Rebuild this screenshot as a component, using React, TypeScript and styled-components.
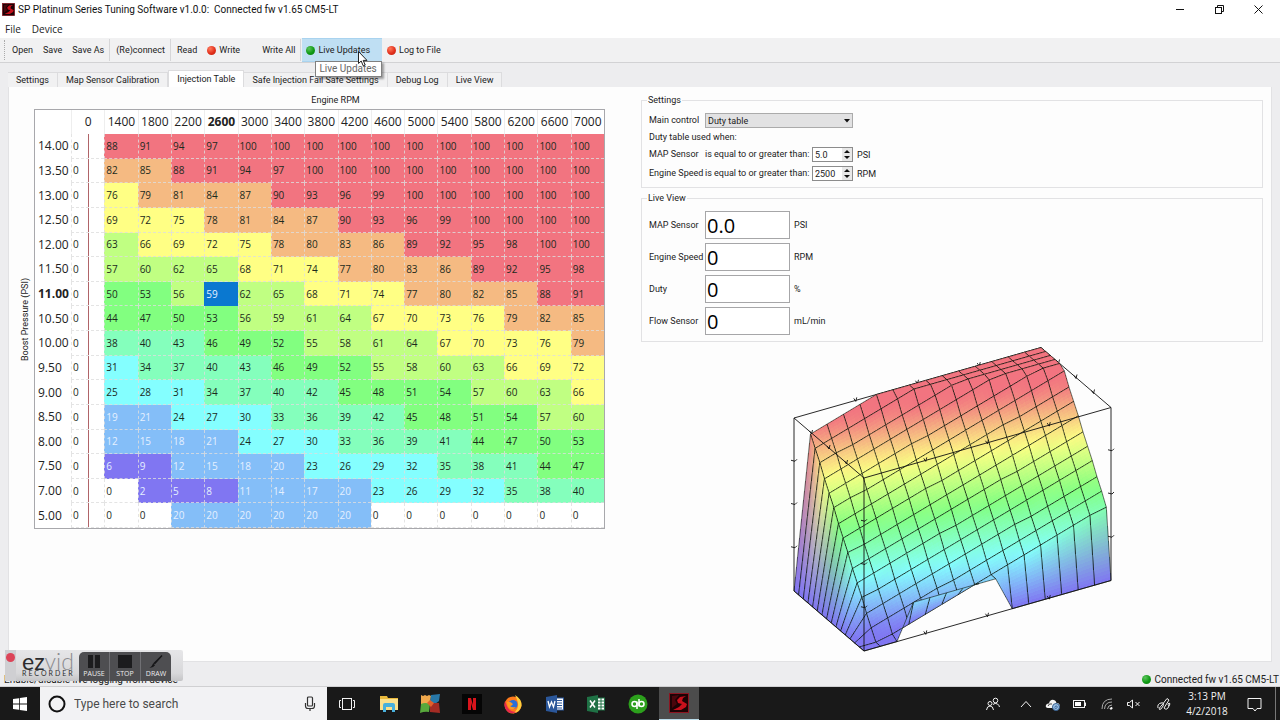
import React from "react";
import styled, { createGlobalStyle } from "styled-components";

const UI = `Roboto, "Liberation Sans", sans-serif`;
const SEGOE = `"Open Sans", "Noto Sans", sans-serif`;

const GlobalStyle = createGlobalStyle`
  * { box-sizing: border-box; }
  body { margin: 0; background: #ededef; color: #222; font-family: ${UI}; font-size: 9px; }
  button, input, select { font: inherit; color: inherit; margin: 0; }
`;

/* ---------- data ---------- */

const RPM = [0, 1400, 1800, 2200, 2600, 3000, 3400, 3800, 4200, 4600, 5000, 5400, 5800, 6200, 6600, 7000];

const ROWS: [string, number[]][] = [
  ["14.00", [0, 88, 91, 94, 97, 100, 100, 100, 100, 100, 100, 100, 100, 100, 100, 100]],
  ["13.50", [0, 82, 85, 88, 91, 94, 97, 100, 100, 100, 100, 100, 100, 100, 100, 100]],
  ["13.00", [0, 76, 79, 81, 84, 87, 90, 93, 96, 99, 100, 100, 100, 100, 100, 100]],
  ["12.50", [0, 69, 72, 75, 78, 81, 84, 87, 90, 93, 96, 99, 100, 100, 100, 100]],
  ["12.00", [0, 63, 66, 69, 72, 75, 78, 80, 83, 86, 89, 92, 95, 98, 100, 100]],
  ["11.50", [0, 57, 60, 62, 65, 68, 71, 74, 77, 80, 83, 86, 89, 92, 95, 98]],
  ["11.00", [0, 50, 53, 56, 59, 62, 65, 68, 71, 74, 77, 80, 82, 85, 88, 91]],
  ["10.50", [0, 44, 47, 50, 53, 56, 59, 61, 64, 67, 70, 73, 76, 79, 82, 85]],
  ["10.00", [0, 38, 40, 43, 46, 49, 52, 55, 58, 61, 64, 67, 70, 73, 76, 79]],
  ["9.50", [0, 31, 34, 37, 40, 43, 46, 49, 52, 55, 58, 60, 63, 66, 69, 72]],
  ["9.00", [0, 25, 28, 31, 34, 37, 40, 42, 45, 48, 51, 54, 57, 60, 63, 66]],
  ["8.50", [0, 19, 21, 24, 27, 30, 33, 36, 39, 42, 45, 48, 51, 54, 57, 60]],
  ["8.00", [0, 12, 15, 18, 21, 24, 27, 30, 33, 36, 39, 41, 44, 47, 50, 53]],
  ["7.50", [0, 6, 9, 12, 15, 18, 20, 23, 26, 29, 32, 35, 38, 41, 44, 47]],
  ["7.00", [0, 0, 2, 5, 8, 11, 14, 17, 20, 23, 26, 29, 32, 35, 38, 40]],
  ["5.00", [0, 0, 0, 20, 20, 20, 20, 20, 20, 0, 0, 0, 0, 0, 0, 0]],
];

const SELECTED_RPM = 2600;
const SELECTED_PSI = "11.00";

const PALETTE = ["#8076f2", "#84bef8", "#84ffff", "#84ffbc", "#82ff80", "#c0ff82", "#ffff84", "#f5ba82", "#f27480"];

const cellColor = (v: number) => (v === 0 ? "#ffffff" : PALETTE[Math.min(8, Math.floor((v - 0.01) / 10.95))]);

/* ---------- frame ---------- */

const Window = styled.div`
  min-height: 100vh;
  display: flex;
  flex-direction: column;
`;

const TitleBar = styled.header`
  display: flex;
  align-items: center;
  height: 19px;
  padding: 0 2px;
  gap: 3px;
  background: #fff;
  color: #111;
`;

const Title = styled.h1`
  flex: 1;
  margin: 0;
  font: 400 10px/18px ${UI};
  white-space: pre;
`;

const WindowControls = styled.div`
  display: flex;
`;

const WindowButton = styled.button`
  width: 39px;
  height: 19px;
  padding: 0;
  border: 0;
  background: none;
  display: grid;
  place-items: center;
`;

const MenuBar = styled.nav`
  display: flex;
  height: 19px;
  gap: 1px;
  background: #fff;
`;

const MenuItem = styled.button`
  border: 0;
  padding: 0 5px;
  background: none;
  font: 400 10px/18px ${SEGOE};
`;

const ToolBar = styled.div`
  display: flex;
  align-items: center;
  height: 25px;
  padding-left: 4px;
  background: #f1f1f2;
  border-bottom: 1px solid #d2d2d4;
`;

const Grip = styled.span`
  height: 20px;
  margin-right: 2px;
  border-left: 1px dotted #aaa;
`;

const Separator = styled.span`
  height: 22px;
  margin-right: 1px;
  border-left: 1px solid #d6d6d8;
`;

const ToolButton = styled.button<{ $active?: boolean; $after?: number }>`
  position: relative;
  display: flex;
  align-items: center;
  gap: 3px;
  height: 24px;
  padding: ${(p) => (p.$active ? "0 12px 0 4px" : "0 5px")};
  margin-right: ${(p) => p.$after ?? 0}px;
  border: 1px solid ${(p) => (p.$active ? "#a9d3ef" : "transparent")};
  border-width: 1px 0;
  background: ${(p) => (p.$active ? "#bfdff3" : "none")};
  white-space: nowrap;
`;

const Led = styled.span<{ $on?: boolean }>`
  width: 9px;
  height: 9px;
  border-radius: 50%;
  background: ${(p) =>
    p.$on
      ? "radial-gradient(circle at 35% 30%, #5cc45c, #0f9a14 55%, #0a7a10)"
      : "radial-gradient(circle at 35% 30%, #ff7a5c, #e2301c 55%, #b8200f)"};
`;

const ToolTip = styled.span`
  position: absolute;
  z-index: 2;
  left: 13px;
  top: 22px;
  padding: 0 4px 0 3px;
  border: 1px solid #808080;
  background: #fff;
  box-shadow: 2px 2px 2px rgba(0, 0, 0, 0.35);
  color: #666;
  font: 400 10px/14px ${UI};
`;

const Cursor = styled.svg`
  position: absolute;
  z-index: 3;
  left: 56px;
  top: 12px;
`;

const Tabs = styled.div`
  display: flex;
  align-items: flex-end;
  height: 24px;
  padding: 0 8px;
`;

const Tab = styled.button<{ $selected?: boolean }>`
  height: ${(p) => (p.$selected ? 17 : 15)}px;
  padding: 0 8px;
  border: 1px solid #dcdcde;
  border-bottom: 0;
  border-left-width: ${(p) => (p.$selected ? 1 : 0)}px;
  background: ${(p) => (p.$selected ? "#fff" : "#f1f1f2")};
  white-space: nowrap;
`;

const Pane = styled.main`
  flex: 1;
  display: grid;
  grid-template-columns: 586fr 622fr;
  gap: 36px;
  align-items: start;
  margin: 0 8px;
  padding: 7px 8px 5px 10px;
  background: #fdfdfd;
  border: 1px solid #e2e2e4;
  border-width: 0 1px 1px;
`;

/* ---------- injection table ---------- */

const MapArea = styled.section`
  display: grid;
  grid-template-columns: 15px 1fr;
  row-gap: 2px;
`;

const AxisTop = styled.div`
  grid-column: 2;
  padding-left: 32px;
  line-height: 13px;
  text-align: center;
`;

const AxisLeft = styled.div`
  writing-mode: vertical-rl;
  transform: rotate(180deg);
  line-height: 12px;
  text-align: center;
  justify-self: start;
`;

const Grid = styled.table`
  width: 100%;
  height: 420px;
  table-layout: fixed;
  border-collapse: separate;
  border-spacing: 0;
  border: 1px solid #a8a8ac;
  background: #fff;
  font-family: ${SEGOE};
`;

const CornerHead = styled.th`
  width: 36px;
  height: 24px;
  padding: 0;
`;

const Head = styled.th<{ $bold?: boolean }>`
  padding: 0;
  height: 24px;
  border-left: 1px solid #eee;
  font-size: 12px;
  font-weight: ${(p) => (p.$bold ? 700 : 400)};
  line-height: 16px;
  white-space: nowrap;
  text-align: center;
`;

const RowHead = styled.th<{ $bold?: boolean }>`
  padding: 0 0 0 3px;
  font-size: 12px;
  font-weight: ${(p) => (p.$bold ? 700 : 400)};
  line-height: 16px;
  text-align: left;
  white-space: nowrap;
`;

const Cell = styled.td<{ $bg: string; $light?: boolean; $marker?: boolean; $selected?: boolean }>`
  padding: 0 1px;
  font-size: 10px;
  line-height: 14px;
  color: ${(p) => (p.$light ? "#e4f0ff" : "#1c2a1c")};
  background: ${(p) =>
    p.$marker ? "linear-gradient(#b06468, #b06468) 50% 0 / 1px 100% no-repeat #fff" : p.$bg};
  border: 1px dashed ${(p) => (p.$selected ? p.$bg : "rgba(222, 222, 222, 0.8)")};
  border-width: 0 0 1px 1px;
`;

function InjectionTable() {
  return (
    <MapArea>
      <AxisTop>Engine RPM</AxisTop>
      <AxisLeft>Boost Pressure (PSI)</AxisLeft>
      <Grid>
        <thead>
          <tr>
            <CornerHead />
            {RPM.map((r) => (
              <Head key={r} scope="col" $bold={r === SELECTED_RPM}>
                {r}
              </Head>
            ))}
          </tr>
        </thead>
        <tbody>
          {ROWS.map(([psi, values]) => (
            <tr key={psi}>
              <RowHead scope="row" $bold={psi === SELECTED_PSI}>
                {psi}
              </RowHead>
              {values.map((v, i) => {
                const selected = psi === SELECTED_PSI && RPM[i] === SELECTED_RPM;
                return (
                  <Cell
                    key={i}
                    $bg={selected ? "#0a78d0" : cellColor(v)}
                    $light={selected || (v > 0 && v < 22)}
                    $selected={selected}
                    $marker={i === 0}
                  >
                    {v}
                  </Cell>
                );
              })}
            </tr>
          ))}
        </tbody>
      </Grid>
    </MapArea>
  );
}

/* ---------- settings and live view ---------- */

const Group = styled.fieldset`
  margin: 0 0 4px;
  padding: 7px 7px 6px;
  border: 1px solid #e2e2e4;
  min-width: 0;
`;

const Legend = styled.legend`
  padding: 0 1px;
  margin-left: -2px;
  line-height: 12px;
`;

const Lines = styled.div`
  display: grid;
  gap: 4px;
`;

const Line = styled.div`
  display: grid;
  grid-template-columns: 56px auto 1fr;
  align-items: center;
`;

const ConditionLine = styled(Line)`
  grid-template-columns: 56px 107px 41px 1fr;
`;

const Plain = styled.span`
  line-height: 11px;
  white-space: nowrap;
`;

const FieldLabel = styled.label`
  line-height: 11px;
  white-space: nowrap;
`;

const Unit = styled.span`
  padding-left: 4px;
`;

const SelectBox = styled.div`
  position: relative;
  width: 148px;
  svg {
    position: absolute;
    right: 3px;
    top: 6px;
    pointer-events: none;
  }
`;

const Select = styled.select`
  display: block;
  appearance: none;
  width: 100%;
  height: 15px;
  padding: 0 2px;
  border: 1px solid #ababab;
  border-radius: 0;
  background: #e2e2e3;
`;

const SpinBox = styled.div`
  display: flex;
  height: 15px;
  border: 1px solid #8c8c8c;
  background: #fff;
`;

const SpinInput = styled.input`
  flex: 1;
  min-width: 0;
  padding: 0 2px;
  border: 0;
  background: none;
`;

const SpinButtons = styled.div`
  display: grid;
  width: 10px;
  background: #e8e8e8;
`;

const SpinButton = styled.button`
  display: grid;
  place-items: center;
  padding: 0;
  border: 0;
  background: none;
`;

const Readout = styled.input`
  width: 85px;
  height: 28px;
  padding: 0 1px;
  border: 1px solid #a6a6a8;
  background: #fff;
  color: #000;
  font: 400 20px/26px ${SEGOE};
`;

function Spin({ id, value }: { id: string; value: string }) {
  return (
    <SpinBox>
      <SpinInput id={id} defaultValue={value} />
      <SpinButtons>
        <SpinButton aria-label="Increase">
          <svg width="6" height="3" viewBox="0 0 6 3"><path d="M0 3L3 0L6 3Z" fill="#111" /></svg>
        </SpinButton>
        <SpinButton aria-label="Decrease">
          <svg width="6" height="3" viewBox="0 0 6 3"><path d="M0 0L3 3L6 0Z" fill="#111" /></svg>
        </SpinButton>
      </SpinButtons>
    </SpinBox>
  );
}

const CONDITIONS = [
  { id: "map-limit", name: "MAP Sensor", value: "5.0", unit: "PSI" },
  { id: "rpm-limit", name: "Engine Speed", value: "2500", unit: "RPM" },
];

const READOUTS = [
  { id: "live-map", name: "MAP Sensor", value: "0.0", unit: "PSI" },
  { id: "live-rpm", name: "Engine Speed", value: "0", unit: "RPM" },
  { id: "live-duty", name: "Duty", value: "0", unit: "%" },
  { id: "live-flow", name: "Flow Sensor", value: "0", unit: "mL/min" },
];

/* ---------- 3D surface ---------- */

type Pt = [number, number];

const STEPS = 15;
const HEIGHT = 173;

// Screen position of grid point (i = rpm index, j = pressure index, z = duty 0..100).
const project = (i: number, j: number, z: number): Pt => [
  74 + (i / STEPS) * 247 - (j / STEPS) * 70,
  307 - (i / STEPS) * 70.5 - (j / STEPS) * 60 - (z / 100) * HEIGHT,
];

const duty = (i: number, j: number) => ROWS[STEPS - j][1][i];

const rgb = (hex: string) => [1, 3, 5].map((k) => parseInt(hex.slice(k, k + 2), 16));
const mix = (a: number[], b: number[], t: number) => a.map((v, k) => v + (b[k] - v) * t);

const heat = (v: number) => {
  const p = Math.max(0, Math.min(8, (v - 5) / 10.9));
  const k = Math.min(7, Math.floor(p));
  return mix(rgb(PALETTE[k]), rgb(PALETTE[k + 1]), p - k);
};

const lerp = (a: number, b: number, t: number) => a + (b - a) * t;
const pts = (list: Pt[]) => list.map((p) => p.map((n) => n.toFixed(2)).join(",")).join(" ");

// Cells are painted back to front, each split finely enough for its colour to blend.
function buildSurface() {
  const out: React.ReactNode[] = [];
  for (let j = STEPS - 1; j >= 0; j--) {
    for (let i = STEPS - 1; i >= 0; i--) {
      const a = duty(i, j), b = duty(i + 1, j), c = duty(i + 1, j + 1), d = duty(i, j + 1);
      const ca = heat(a), cb = heat(b), cc = heat(c), cd = heat(d);
      const z = (u: number, v: number) => lerp(lerp(a, b, u), lerp(d, c, u), v);
      const nu = Math.max(4, Math.ceil(Math.max(Math.abs(a - b), Math.abs(c - d)) / 3));
      const nv = Math.max(5, Math.ceil(Math.max(Math.abs(a - d), Math.abs(b - c)) / 2));
      for (let m = nv - 1; m >= 0; m--) {
        for (let n = nu - 1; n >= 0; n--) {
          const u0 = n / nu, u1 = (n + 1) / nu, v0 = m / nv, v1 = (m + 1) / nv;
          const um = (u0 + u1) / 2, vm = (v0 + v1) / 2;
          const col = mix(mix(ca, cb, um), mix(cd, cc, um), vm).map(Math.round).join(",");
          const quad: Pt[] = [
            project(i + u0, j + v0, z(u0, v0)),
            project(i + u1, j + v0, z(u1, v0)),
            project(i + u1, j + v1, z(u1, v1)),
            project(i + u0, j + v1, z(u0, v1)),
          ];
          out.push(
            <polygon key={`${i}-${j}-${m}-${n}`} points={pts(quad)} fill={`rgb(${col})`} shapeRendering="crispEdges" />
          );
        }
      }
      out.push(
        <polygon
          key={`m${i}-${j}`}
          points={pts([project(i, j, a), project(i + 1, j, b), project(i + 1, j + 1, c), project(i, j + 1, d)])}
          fill="none"
          stroke="#0c160c"
          strokeWidth="0.6"
        />
      );
    }
  }
  return out;
}

const surface = buildSurface();

const N = STEPS;
const BACK_EDGES: [Pt, Pt][] = [
  [project(0, N, 100), project(N, N, 100)],
  [project(N, N, 100), project(N, 0, 100)],
];
const FRONT_EDGES: [Pt, Pt][] = [
  [project(0, N, 100), project(0, 0, 100)],
  [project(0, 0, 100), project(N, 0, 100)],
  [project(0, N, 0), project(0, N, 100)],
  [project(0, 0, 0), project(0, 0, 100)],
  [project(N, 0, 0), project(N, 0, 100)],
  [project(0, 0, 0), project(N, 0, 0)],
  [project(0, 0, 0), project(0, N, 0)],
];

function Edges({ list, ticks }: { list: [Pt, Pt][]; ticks: number[] }) {
  return (
    <g stroke="#111" strokeWidth="0.9" fill="none">
      {list.map(([p, q], k) => {
        const vertical = Math.abs(p[0] - q[0]) < 1;
        return (
          <g key={k}>
            <path d={`M${p[0]} ${p[1]}L${q[0]} ${q[1]}`} />
            {ticks.map((t) => {
              const x = lerp(p[0], q[0], t);
              const y = lerp(p[1], q[1], t);
              return (
                <path key={t} d={vertical ? `M${x - 3} ${y - 1}L${x + 1} ${y}L${x + 3} ${y - 2}` : `M${x - 2} ${y - 2}L${x} ${y + 1}L${x + 1} ${y - 3}`} />
              );
            })}
          </g>
        );
      })}
    </g>
  );
}

const Plot = styled.svg`
  display: block;
  margin: -2px auto 0;
  overflow: visible;
`;

/* ---------- status bar, recorder, task bar ---------- */

const StatusBar = styled.footer`
  position: relative;
  display: flex;
  justify-content: space-between;
  align-items: flex-end;
  height: 25px;
  padding: 0 1px 0 4px;
  border-bottom: 1px solid #d0d0d2;
  font: 400 10px/13px ${UI};
`;

const Connection = styled.span`
  display: flex;
  align-items: center;
  gap: 4px;
`;

const Recorder = styled.div`
  position: absolute;
  left: 5px;
  bottom: 5px;
  display: flex;
  align-items: flex-end;
  width: 178px;
  height: 31px;
  background: linear-gradient(#e6e6e8, #d8d8da 75%, #c4c4c6);
  border-radius: 2px;
`;

const RecordStrip = styled.span`
  align-self: stretch;
  width: 11px;
  padding: 3px 1px;
  background: #cfcfd2;
`;

const RecordDot = styled.span`
  display: block;
  width: 9px;
  height: 9px;
  border-radius: 50%;
  background: #dc4458;
`;

const Brand = styled.span`
  width: 63px;
  padding: 0 0 5px 6px;
  font-family: Lato, sans-serif;
  color: #2c2c2e;
`;

const BrandName = styled.span`
  display: block;
  font-size: 23px;
  line-height: 17px;
  em { font-style: normal; font-weight: 300; color: #8c8c90; }
`;

const BrandSub = styled.span`
  display: block;
  font-size: 7px;
  line-height: 6px;
  letter-spacing: 2px;
`;

const RecorderButtons = styled.div`
  display: flex;
  width: 92px;
  height: 29px;
  border-radius: 5px 5px 0 0;
  background: #4e4e51;
  overflow: hidden;
`;

const RecorderButton = styled.button`
  flex: 1;
  display: flex;
  flex-direction: column;
  align-items: center;
  gap: 1px;
  padding: 3px 0 0;
  border: 0;
  border-right: 1px solid #707074;
  background: none;
  color: #ececec;
  font: 400 7px/9px ${SEGOE};
  &:last-child { border-right: 0; }
`;

const TaskBar = styled.nav`
  display: flex;
  height: 34px;
  background: #191919;
  color: #f2f2f2;
`;

const TaskButton = styled.button<{ $active?: boolean }>`
  width: 40px;
  padding: 0;
  border: 0;
  border-bottom: ${(p) => (p.$active ? "2px solid #b9dbe8" : "0")};
  background: ${(p) => (p.$active ? "#4c4c4c" : "none")};
  display: grid;
  place-items: center;
`;

const Search = styled.label`
  display: flex;
  align-items: center;
  gap: 8px;
  width: 287px;
  padding: 0 10px 0 8px;
  background: #f2f2f4;
  color: #444;
`;

const SearchInput = styled.input`
  flex: 1;
  min-width: 0;
  padding: 0;
  border: 0;
  background: none;
  font: 400 12px/16px ${UI};
  &::placeholder { color: #4a4a4a; opacity: 1; }
`;

const Apps = styled.div`
  display: flex;
  justify-content: space-between;
  width: 372px;
`;

const Tray = styled.div`
  display: flex;
  align-items: stretch;
  margin-left: auto;
`;

const TrayButton = styled.button<{ $w?: number }>`
  width: ${(p) => p.$w ?? 27}px;
  padding: 0;
  border: 0;
  background: none;
  display: grid;
  place-items: center;
`;

const Clock = styled.time`
  width: 52px;
  padding-top: 2px;
  font: 400 10px/15px ${SEGOE};
  text-align: center;
`;

const ShowDesktop = styled.button`
  width: 5px;
  padding: 0;
  border: 0;
  border-left: 1px solid #777;
  background: none;
`;

function SpIcon({ size }: { size: number }) {
  return (
    <svg width={size} height={size} viewBox="0 0 20 20">
      <rect x="0.5" y="0.5" width="19" height="19" fill="#1c0305" stroke="#8d1420" />
      <path d="M3 3L10 2L6 7L8 11L3 15Z" fill="#4a060c" />
      <path d="M17 3L11 4L8 7L9 10L13 11L10 14L4 17L12 17L17 14L18 11L13 8L14 5Z" fill="#c8101c" />
    </svg>
  );
}

const Line1 = { fill: "none", stroke: "currentColor", strokeWidth: 1 };

const APPS: { name: string; active?: boolean; icon: React.ReactNode }[] = [
  {
    name: "Task View",
    icon: (
      <svg width="18" height="14" viewBox="0 0 18 14" {...Line1}>
        <rect x="4.5" y="1.5" width="9" height="11" />
        <path d="M3 3.5H1.500V10.500H3M15 3.500H16.500V10.500H15" />
      </svg>
    ),
  },
  {
    name: "File Explorer",
    icon: (
      <svg width="20" height="18" viewBox="0 0 20 18">
        <path d="M1 1H8L9 3H19V15H1Z" fill="#e9b93c" />
        <path d="M1 4H19V15H1Z" fill="#fbe08c" />
        <path d="M4 17V10Q4 8 6 8H14Q16 8 16 10V17H13V12H7V17Z" fill="#48b0dc" />
      </svg>
    ),
  },
  {
    name: "Start Menu",
    icon: (
      <svg width="20" height="20" viewBox="0 0 20 20">
        <path d="M1 1L3 2L5 1L7 2L9 1L11 2L10 10L1 11Z" fill="#f0a84c" />
        <path d="M11 1L20 0L19 7L15 10L10 9Z" fill="#2878a8" />
        <path d="M1 10Q5 8 10 10L9 18Q5 17 0 19Z" fill="#58a83c" />
        <path d="M10 9L19 9L20 19L10 18Z" fill="#a42c24" />
        <path d="M10 6L14 9L11 13L7 9Z" fill="#e0602c" />
      </svg>
    ),
  },
  {
    name: "Netflix",
    icon: (
      <svg width="20" height="20" viewBox="0 0 20 20">
        <rect width="20" height="20" fill="#050505" />
        <path d="M6 4H9L11 11V4H14V16H11L9 9V16H6Z" fill="#d8141c" />
      </svg>
    ),
  },
  {
    name: "Firefox",
    icon: (
      <svg width="20" height="20" viewBox="0 0 20 20">
        <circle cx="10" cy="11" r="8.500" fill="#ff7a1c" />
        <path d="M12 1Q19 5 18.500 12Q16 19 10 19.500Q16 15 15 9Q14 5 12 1Z" fill="#ffcf3c" />
        <path d="M2 7Q0 15 6 18.500Q10 20 14 18Q6 18 4 12Z" fill="#e8284c" />
        <circle cx="10" cy="10.500" r="4.500" fill="#2a6fd8" />
        <path d="M4 8Q7 7 10 10Q9 12 7 12Q9 14 13 13Q10 17 6 14Q4 12 4 8Z" fill="#ff9a20" />
      </svg>
    ),
  },
  {
    name: "Word",
    icon: (
      <svg width="18" height="18" viewBox="0 0 18 18">
        <rect x="9" y="3" width="8.500" height="12" fill="#fff" stroke="#2b579a" />
        <path d="M11 5.500H16M11 8H16M11 10.500H16M11 13H16" stroke="#2b579a" />
        <path d="M0 2L11 0V18L0 16Z" fill="#2b579a" />
        <path d="M2 6L3.500 12L5.500 7L7.500 12L9 6" fill="none" stroke="#fff" strokeWidth="1.300" />
      </svg>
    ),
  },
  {
    name: "Excel",
    icon: (
      <svg width="18" height="18" viewBox="0 0 18 18">
        <rect x="9" y="3" width="8.500" height="12" fill="#fff" stroke="#1f7145" />
        <path d="M14 3V15M11 6H17M11 9H17M11 12H17" stroke="#1f7145" />
        <path d="M0 2L11 0V18L0 16Z" fill="#1f7145" />
        <path d="M3 5.500L8 12.500M8 5.500L3 12.500" stroke="#fff" strokeWidth="1.500" />
      </svg>
    ),
  },
  {
    name: "QuickBooks",
    icon: (
      <svg width="20" height="20" viewBox="0 0 20 20">
        <circle cx="10" cy="10" r="9.500" fill="#2ca01c" />
        <g fill="none" stroke="#fff" strokeWidth="1.500">
          <circle cx="6.500" cy="10" r="2.500" />
          <circle cx="13.500" cy="10" r="2.500" />
          <path d="M9 7.500V15M11 12.500V5" />
        </g>
      </svg>
    ),
  },
  { name: "SP Tuning", active: true, icon: <SpIcon size={20} /> },
];

const TABS = ["Settings", "Map Sensor Calibration", "Injection Table", "Safe Injection Fail Safe Settings", "Debug Log", "Live View"];

export default function App() {
  return (
    <>
      <GlobalStyle />
      <Window>
        <TitleBar>
          <SpIcon size={13} />
          <Title>{"SP Platinum Series Tuning Software v1.0.0:  Connected fw v1.65 CM5-LT"}</Title>
          <WindowControls>
            <WindowButton aria-label="Minimize">
              <svg width="9" height="9" viewBox="0 0 9 9" {...Line1}><path d="M0 4.500H8" /></svg>
            </WindowButton>
            <WindowButton aria-label="Restore">
              <svg width="9" height="9" viewBox="0 0 9 9" {...Line1}>
                <rect x="0.500" y="2.500" width="6" height="6" />
                <path d="M2.500 2.500V0.500H8.500V6.500H6.500" />
              </svg>
            </WindowButton>
            <WindowButton aria-label="Close">
              <svg width="9" height="9" viewBox="0 0 9 9" {...Line1}><path d="M0.500 0.500L8.500 8.500M8.500 0.500L0.500 8.500" /></svg>
            </WindowButton>
          </WindowControls>
        </TitleBar>

        <MenuBar>
          <MenuItem>File</MenuItem>
          <MenuItem>Device</MenuItem>
        </MenuBar>

        <ToolBar>
          <Grip />
          <ToolButton>Open</ToolButton>
          <ToolButton>Save</ToolButton>
          <ToolButton>Save As</ToolButton>
          <Separator />
          <ToolButton>(Re)connect</ToolButton>
          <Separator />
          <ToolButton>Read</ToolButton>
          <ToolButton $after={12}><Led />Write</ToolButton>
          <ToolButton>Write All</ToolButton>
          <Separator />
          <ToolButton $active>
            <Led $on />
            Live Updates
            <ToolTip role="tooltip">Live Updates</ToolTip>
            <Cursor width="10" height="16" viewBox="0 0 10 16">
              <path d="M0.500 0.500V12.500L3.200 10L5.200 14.800L7.200 14L5.200 9.400H9Z" fill="#fff" stroke="#222" />
            </Cursor>
          </ToolButton>
          <ToolButton><Led />Log to File</ToolButton>
        </ToolBar>

        <Tabs role="tablist">
          {TABS.map((t) => (
            <Tab key={t} role="tab" aria-selected={t === "Injection Table"} $selected={t === "Injection Table"}>
              {t}
            </Tab>
          ))}
        </Tabs>

        <Pane>
          <InjectionTable />
          <section>
            <Group>
              <Legend>Settings</Legend>
              <Lines>
                <Line>
                  <FieldLabel htmlFor="main-control">Main control</FieldLabel>
                  <SelectBox>
                    <Select id="main-control" defaultValue="Duty table">
                      <option>Duty table</option>
                    </Select>
                    <svg width="6" height="4" viewBox="0 0 6 4"><path d="M0 0H6L3 3.500Z" fill="#111" /></svg>
                  </SelectBox>
                </Line>
                <Plain>Duty table used when:</Plain>
                {CONDITIONS.map((c) => (
                  <ConditionLine key={c.id}>
                    <FieldLabel htmlFor={c.id}>{c.name}</FieldLabel>
                    <Plain>is equal to or greater than:</Plain>
                    <Spin id={c.id} value={c.value} />
                    <Unit>{c.unit}</Unit>
                  </ConditionLine>
                ))}
              </Lines>
            </Group>
            <Group>
              <Legend>Live View</Legend>
              <Lines>
                {READOUTS.map((r) => (
                  <Line key={r.id}>
                    <FieldLabel htmlFor={r.id}>{r.name}</FieldLabel>
                    <Readout id={r.id} readOnly value={r.value} />
                    <Unit>{r.unit}</Unit>
                  </Line>
                ))}
              </Lines>
            </Group>
            <Plot width="324" height="312" viewBox="0 0 324 312" role="img" aria-label="Duty surface">
              <Edges list={BACK_EDGES} ticks={[0.25, 0.5, 0.75]} />
              {surface}
              <Edges list={FRONT_EDGES.slice(0, 6)} ticks={[0.25, 0.5, 0.75]} />
              <Edges list={FRONT_EDGES.slice(6)} ticks={[]} />
            </Plot>
          </section>
        </Pane>

        <StatusBar>
          <span>Enable/disable live logging from device</span>
          <Connection><Led $on />Connected fw v1.65 CM5-LT</Connection>
          <Recorder>
            <RecordStrip><RecordDot /></RecordStrip>
            <Brand>
              <BrandName>ez<em>vid</em></BrandName>
              <BrandSub>RECORDER</BrandSub>
            </Brand>
            <RecorderButtons>
              <RecorderButton>
                <svg width="14" height="13" viewBox="0 0 14 13"><path d="M1 0H6V13H1ZM8 0H13V13H8Z" fill="#1c1c1e" /></svg>
                PAUSE
              </RecorderButton>
              <RecorderButton>
                <svg width="14" height="13" viewBox="0 0 14 13"><rect width="14" height="13" fill="#1c1c1e" /></svg>
                STOP
              </RecorderButton>
              <RecorderButton>
                <svg width="14" height="13" viewBox="0 0 14 14"><path d="M13 0L14 1L6 10L4 9ZM4 9L6 11Q4 14 0 14Q3 12 4 9Z" fill="#161618" /></svg>
                DRAW
              </RecorderButton>
            </RecorderButtons>
          </Recorder>
        </StatusBar>

        <TaskBar>
          <TaskButton aria-label="Start">
            <svg width="14" height="14" viewBox="0 0 14 14" fill="#fff">
              <path d="M0 2L6 1.200V6.600H0ZM6.800 1.100L14 0V6.600H6.800ZM0 7.400H6V12.800L0 12ZM6.800 7.400H14V14L6.800 12.900Z" />
            </svg>
          </TaskButton>
          <Search>
            <svg width="18" height="18" viewBox="0 0 18 18"><circle cx="9" cy="9" r="7.500" fill="none" stroke="#111" strokeWidth="2" /></svg>
            <SearchInput placeholder="Type here to search" aria-label="Search" />
            <svg width="14" height="16" viewBox="0 0 14 16" fill="none" stroke="#333" strokeWidth="1.200">
              <rect x="4.500" y="1" width="5" height="9" rx="1" />
              <path d="M2.500 7V10Q2.500 12.500 5 12.500H9Q11.500 12.500 11.500 10V7M7 12.500V15" />
            </svg>
          </Search>
          <Apps>
            {APPS.map((a) => (
              <TaskButton key={a.name} aria-label={a.name} $active={a.active}>
                {a.icon}
              </TaskButton>
            ))}
          </Apps>
          <Tray>
            <TrayButton aria-label="People" $w={38}>
              <svg width="14" height="14" viewBox="0 0 14 14" {...Line1}>
                <circle cx="9.500" cy="3.500" r="2.300" />
                <circle cx="4" cy="6.500" r="2" />
                <path d="M0.500 13Q1 9 4 9Q7 9 7.500 13M7 7.500Q9 5.500 11.500 7Q13 8 13.500 10" />
              </svg>
            </TrayButton>
            <TrayButton aria-label="Show hidden icons">
              <svg width="12" height="8" viewBox="0 0 12 8" {...Line1}><path d="M1 7L6 1.500L11 7" /></svg>
            </TrayButton>
            <TrayButton aria-label="OneDrive">
              <svg width="16" height="13" viewBox="0 0 16 13">
                <path d="M3 10Q0 9.500 1 7Q2 5 4 5.500Q5 1 9 2Q11 2.500 11.500 5Q15 5 14.500 8Q14 10 12 10Z" fill="#f4f4f4" />
                <path d="M3 8Q4 5 7 6" fill="none" stroke="#444" />
                <circle cx="11" cy="9" r="3.500" fill="#9fc4e8" stroke="#355f90" />
                <path d="M9.500 9Q11 7 12.500 8.500M12.500 9.500Q11 11 9.500 10" fill="none" stroke="#1c4880" strokeWidth="0.800" />
              </svg>
            </TrayButton>
            <TrayButton aria-label="Battery">
              <svg width="14" height="9" viewBox="0 0 14 9" {...Line1}>
                <rect x="0.500" y="0.500" width="11" height="7" />
                <path d="M12.500 2.500V6" />
                <rect x="2" y="2" width="6" height="4" fill="#fff" stroke="none" />
              </svg>
            </TrayButton>
            <TrayButton aria-label="Network">
              <svg width="12" height="12" viewBox="0 0 12 12" {...Line1}>
                <path d="M1 11Q1 1 11 1M3.500 11Q4 4 11 4M6.500 11Q7 7 11 7" stroke="#a8a8a8" />
                <path d="M9 11Q9 9.500 11 9.500V11Z" fill="#fff" />
              </svg>
            </TrayButton>
            <TrayButton aria-label="Muted">
              <svg width="14" height="10" viewBox="0 0 14 10" {...Line1}>
                <path d="M0.500 3.500H2.500L5.500 1V9L2.500 6.500H0.500ZM8.500 3L12.500 7M12.500 3L8.500 7" />
              </svg>
            </TrayButton>
            <TrayButton aria-label="Ink Workspace" $w={34}>
              <svg width="15" height="14" viewBox="0 0 15 14" {...Line1}>
                <path d="M1 11Q0 7 4 6Q8 5 6 9Q4 13 2.500 12.500Q1 12 5 8L10 1.500L12 3L7 11Q10 14 12 9Q14 6 12 6Q10 7 12 9" />
              </svg>
            </TrayButton>
            <Clock>3:13 PM<br />4/2/2018</Clock>
            <TrayButton aria-label="Notifications" $w={42}>
              <svg width="15" height="15" viewBox="0 0 15 15" {...Line1}>
                <path d="M1 1.500H14V11.500H10L8 14L6 11.500H1Z" />
              </svg>
            </TrayButton>
            <ShowDesktop aria-label="Show desktop" />
          </Tray>
        </TaskBar>
      </Window>
    </>
  );
}
